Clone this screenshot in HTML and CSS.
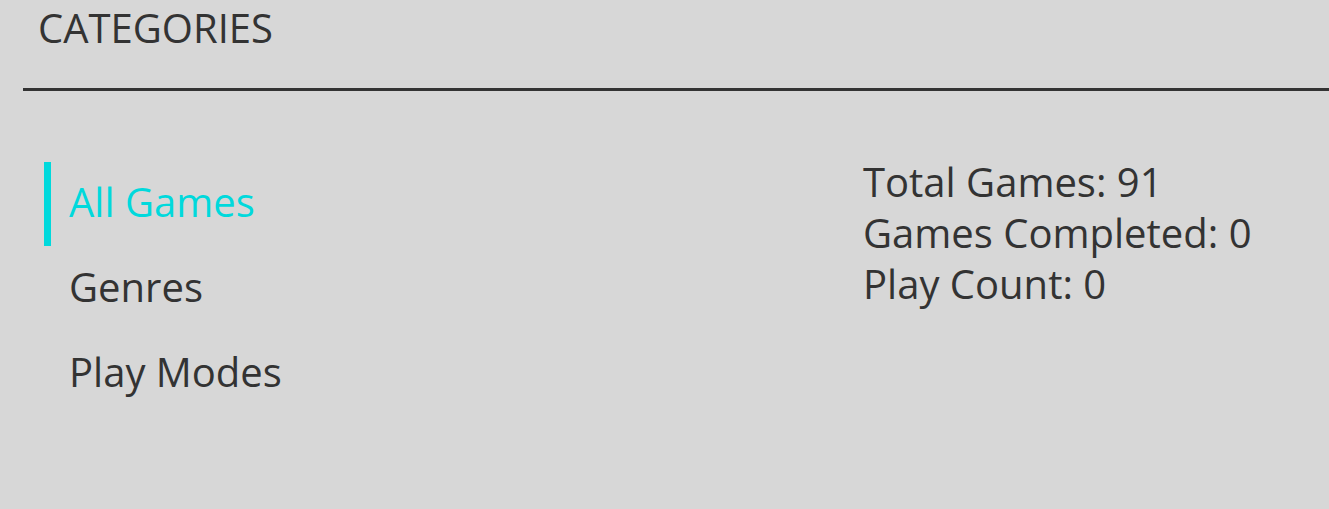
FILE: index.html
```html
<!DOCTYPE html>
<html>
<head>
<meta charset="utf-8">
<link rel="stylesheet" href="styles.css">
</head>
<body>
<div class="page">
  <div class="header">CATEGORIES</div>
  <div class="content">
    <ul class="nav">
      <li class="nav-item active">All Games</li>
      <li class="nav-item">Genres</li>
      <li class="nav-item">Play Modes</li>
    </ul>
    <div class="stats">
      <div class="stat">Total Games: 91</div>
      <div class="stat">Games Completed: 0</div>
      <div class="stat">Play Count: 0</div>
    </div>
  </div>
</div>
</body>
</html>
```
FILE: styles.css
```css
html, body {
  margin: 0;
  padding: 0;
  background: #d7d7d7;
  height: 100%;
}
body {
  font-family: "Open Sans", "Noto Sans", sans-serif;
  color: #333333;
}
.page {
  margin-left: 23px;
}
.header {
  height: 91px;
  box-sizing: border-box;
  padding-left: 15px;
  font-size: 40px;
  line-height: 56px;
  border-bottom: 3px solid #333333;
}
.content {
  display: flex;
  padding-top: 71px;
}
.nav {
  list-style: none;
  margin: 0 0 0 21px;
  padding: 0;
  width: 819px;
}
.nav-item {
  height: 85px;
  box-sizing: border-box;
  border-left: 7px solid transparent;
  padding-left: 18px;
  font-size: 40px;
  line-height: 80px;
}
.nav-item.active {
  color: #00d9dc;
  border-left-color: #00d9dc;
  height: 84px;
  margin-bottom: 1px;
}
.stats {
  margin-top: -6px;
}
.stat {
  font-size: 40px;
  line-height: 51px;
}
```
